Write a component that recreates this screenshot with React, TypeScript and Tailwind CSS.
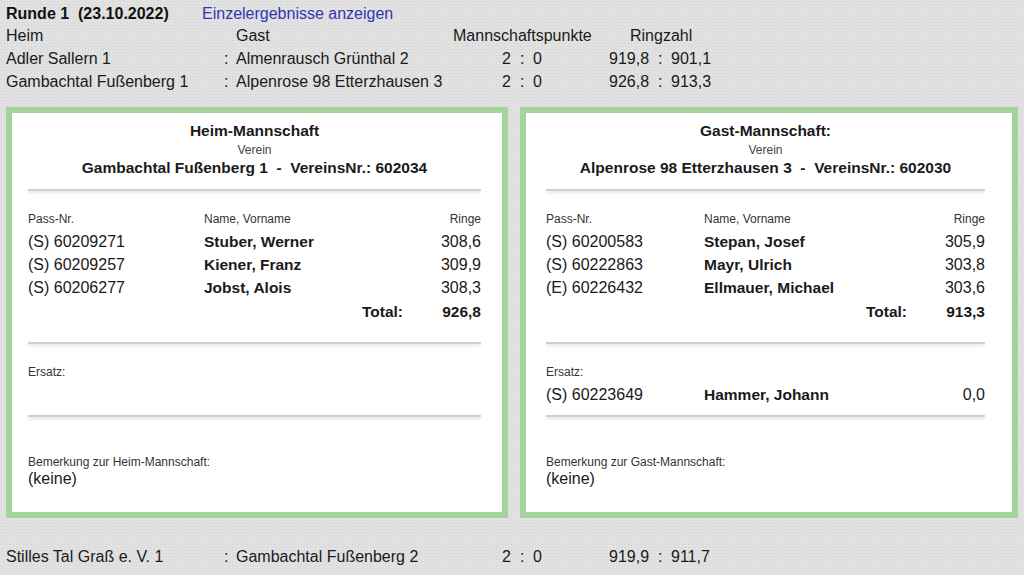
import React from "react";

type Player = { pass: string; name: string; ringe: string };

const FONT = { fontFamily: "'Liberation Sans', Arial, sans-serif" };

function Sep() {
  return <div className="h-[2px] bg-[#cfcfcf] shadow-[0_2px_3px_rgba(0,0,0,0.13)]" />;
}

function PlayerRow({ p, nameW }: { p: Player; nameW: string }) {
  return (
    <div className="flex h-[23px] items-center text-[16px] leading-[23px] text-[#1a1a1a]">
      <span className={nameW}>{p.pass}</span>
      <span className="flex-1 text-[15.5px] font-bold">{p.name}</span>
      <span className="text-right">{p.ringe}</span>
    </div>
  );
}

function Panel({
  title,
  club,
  players,
  total,
  ersatz,
  remark,
  outerW,
  padCls,
  nameW,
}: {
  title: string;
  club: string;
  players: Player[];
  total: string;
  ersatz: Player[];
  remark: string;
  outerW: string;
  padCls: string;
  nameW: string;
}) {
  return (
    <div className={`${outerW} h-[411px] border-[6px] border-[#a4d39c] bg-white`}>
      <div className={`flex flex-col pt-[9px] ${padCls}`}>
        <div className="h-[18px] text-center text-[15.5px] font-bold leading-[18px] text-[#1a1a1a]">
          {title}
        </div>
        <div className="mt-[3px] h-[14px] text-center text-[12px] leading-[14px] text-[#444]">
          Verein
        </div>
        <div className="h-[22px] whitespace-pre text-center text-[15.5px] font-bold leading-[22px] text-[#1a1a1a]">
          {club}
        </div>
        <div className="mt-[10px]">
          <Sep />
        </div>
        <div className="mt-[21px] flex h-[14px] text-[12px] leading-[14px] text-[#333]">
          <span className={nameW}>Pass-Nr.</span>
          <span className="flex-1">Name, Vorname</span>
          <span>Ringe</span>
        </div>
        <div className="mt-[4px] flex flex-col">
          {players.map((p) => (
            <PlayerRow key={p.pass} p={p} nameW={nameW} />
          ))}
        </div>
        <div className="flex h-[23px] items-center justify-end pt-[1px] text-[15.5px] font-bold leading-[23px] text-[#1a1a1a]">
          <span>Total:</span>
          <span className="w-[78px] text-right">{total}</span>
        </div>
        <div className="mt-[20px]">
          <Sep />
        </div>
        <div className="flex h-[71px] flex-col pt-[21px]">
          <div className="h-[14px] text-[12px] leading-[14px] text-[#333]">Ersatz:</div>
          <div className="mt-[4px] flex flex-col">
            {ersatz.map((p) => (
              <PlayerRow key={p.pass} p={p} nameW={nameW} />
            ))}
          </div>
        </div>
        <Sep />
        <div className="mt-[38px] h-[14px] text-[12px] leading-[14px] text-[#333]">{remark}</div>
        <div className="mt-[1px] h-[18px] text-[16px] leading-[18px] text-[#1a1a1a]">(keine)</div>
      </div>
    </div>
  );
}

function MatchRow({ heim, gast, p1, p2, r1, r2 }: { heim: string; gast: string; p1: string; p2: string; r1: string; r2: string }) {
  return (
    <div className="flex h-[23px] items-center text-[16px] leading-[23px] text-[#1a1a1a]">
      <span className="w-[216px]">{heim}</span>
      <span className="w-[14px] pl-[2px]">:</span>
      <span className="w-[266px]">{gast}</span>
      <span className="w-[18px]">{p1}</span>
      <span className="w-[13px]">:</span>
      <span className="w-[76px]">{p2}</span>
      <span className="w-[49px]">{r1}</span>
      <span className="w-[13px]">:</span>
      <span>{r2}</span>
    </div>
  );
}

export default function App() {
  return (
    <div
      style={FONT}
      className="h-[575px] w-[1024px] overflow-hidden bg-[#e1e1e1] bg-[radial-gradient(circle,#d4d4d4_0.7px,transparent_1px)] bg-[length:3px_3px] pl-[6px] pt-[1px]"
    >
      <div className="flex h-[23px] items-center pt-[1px] text-[16px] leading-[23px]">
        <span className="w-[196px] whitespace-pre font-bold text-[#111]">{"Runde 1  (23.10.2022)"}</span>
        <span className="text-[#3434b4]">Einzelergebnisse anzeigen</span>
      </div>
      <div className="flex h-[23px] items-center text-[16px] leading-[23px] text-[#1a1a1a]">
        <span className="w-[230px]">Heim</span>
        <span className="w-[217px]">Gast</span>
        <span className="w-[177px]">Mannschaftspunkte</span>
        <span>Ringzahl</span>
      </div>
      <MatchRow heim="Adler Sallern 1" gast="Almenrausch Grünthal 2" p1="2" p2="0" r1="919,8" r2="901,1" />
      <MatchRow heim="Gambachtal Fußenberg 1" gast="Alpenrose 98 Etterzhausen 3" p1="2" p2="0" r1="926,8" r2="913,3" />

      <div className="mt-[14px] flex gap-[12px]">
        <Panel
          title="Heim-Mannschaft"
          club={"Gambachtal Fußenberg 1  -  VereinsNr.: 602034"}
          players={[
            { pass: "(S) 60209271", name: "Stuber, Werner", ringe: "308,6" },
            { pass: "(S) 60209257", name: "Kiener, Franz", ringe: "309,9" },
            { pass: "(S) 60206277", name: "Jobst, Alois", ringe: "308,3" },
          ]}
          total="926,8"
          ersatz={[]}
          remark="Bemerkung zur Heim-Mannschaft:"
          outerW="w-[502px]"
          padCls="pl-[16px] pr-[21px]"
          nameW="w-[176px]"
        />
        <Panel
          title="Gast-Mannschaft:"
          club={"Alpenrose 98 Etterzhausen 3  -  VereinsNr.: 602030"}
          players={[
            { pass: "(S) 60200583", name: "Stepan, Josef", ringe: "305,9" },
            { pass: "(S) 60222863", name: "Mayr, Ulrich", ringe: "303,8" },
            { pass: "(E) 60226432", name: "Ellmauer, Michael", ringe: "303,6" },
          ]}
          total="913,3"
          ersatz={[{ pass: "(S) 60223649", name: "Hammer, Johann", ringe: "0,0" }]}
          remark="Bemerkung zur Gast-Mannschaft:"
          outerW="w-[498px]"
          padCls="pl-[20px] pr-[27px]"
          nameW="w-[158px]"
        />
      </div>

      <div className="mt-[27px]">
        <MatchRow heim="Stilles Tal Graß e. V. 1" gast="Gambachtal Fußenberg 2" p1="2" p2="0" r1="919,9" r2="911,7" />
      </div>
    </div>
  );
}
